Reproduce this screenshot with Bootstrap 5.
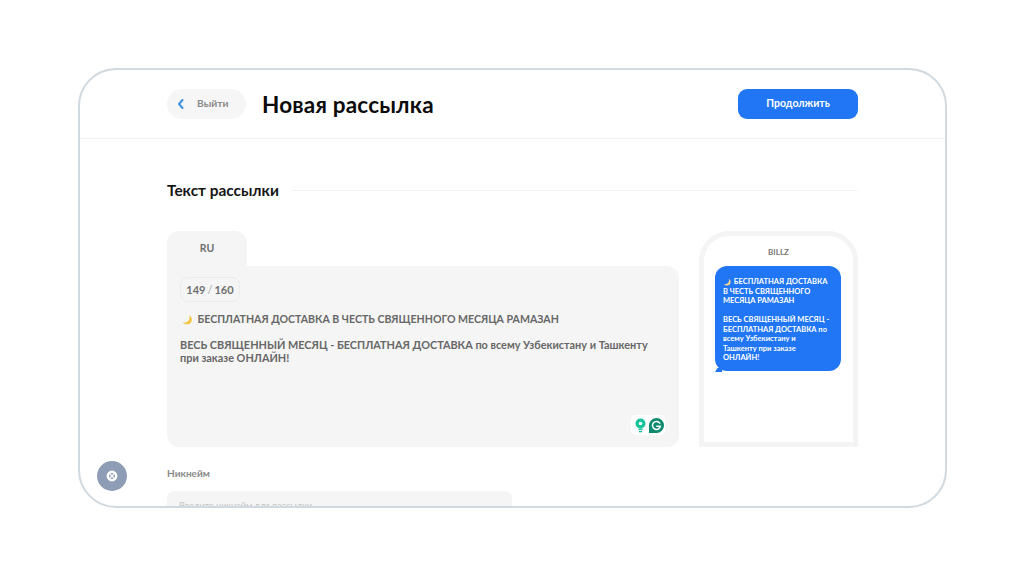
<!DOCTYPE html>
<html lang="ru">

<head>
    <meta charset="UTF-8">
    <meta name="viewport" content="width=device-width, initial-scale=1.0">
    <title>Новая рассылка</title>
    <link rel="stylesheet" href="https://cdn.jsdelivr.net/npm/bootstrap@5.3.0/dist/css/bootstrap.min.css">
    <style>
        html, body { height: 100%; overflow: hidden; background: #fff; }
        body { font-family: Lato, "Noto Sans", sans-serif; }
        .app-frame { position: relative; width: 869px; height: 440px; margin: 68px 0 0 78px; border: 2px solid #d0d9e0; border-radius: 38px; overflow: hidden; background: #fff; }
        .top-bar { height: 69px; padding: 18px 87px; border-bottom: 1px solid #f0f2f4; }
        .back-btn { width: 79px; height: 30px; border-radius: 15px; background: #f6f6f6; font-size: 10.3px; font-weight: 700; color: #8b8b8b; padding-left: 10px; gap: 13px; }
        .page-title { font-size: 22.5px; font-weight: 700; color: #0b0b0b; margin: 0 0 0 16px; letter-spacing: .2px; }
        .next-btn { width: 120px; height: 30px; border-radius: 9px; background: #2176f5; color: #fff; font-size: 10.5px; font-weight: 700; border: 0; padding: 0; }
        .page-body { padding: 41px 87px 0; }
        .section-title { font-size: 15.4px; font-weight: 700; color: #151515; margin: 0 14px 0 0; line-height: 20px; }
        .dots-line { border-top: 1px dotted #e8e8e8; }
        .editor-row { margin-top: 31px; gap: 20px; }
        .editor-col { width: 512px; }
        .lang-tab { width: 80px; height: 35px; background: #f5f5f5; border-radius: 12px 12px 0 0; font-size: 10.5px; font-weight: 700; color: #6f6f6f; }
        .editor-panel { position: relative; height: 181px; background: #f5f5f5; border-radius: 0 12px 12px 12px; padding: 11px 12px 0 13px; font-size: 10.6px; font-weight: 700; color: #676767; line-height: 13px; }
        .counter-pill { width: 60px; height: 25px; border: 1px solid #ececec; border-radius: 8px; font-size: 11px; font-weight: 700; color: #6f6f6f; margin-bottom: 11px; padding-bottom: 1px; }
        .counter-pill span { color: #aaa; font-weight: 400; margin: 0 2px; }
        .msg-line { margin: 0; }
        .msg-moon { margin: 0 2px 0 2px; vertical-align: -2px; }
        .msg-gap { margin-top: 12px; font-size: 10.9px; }
        .grammar-box { position: absolute; right: 14px; bottom: 12px; width: 34px; height: 20px; background: #fff; border-radius: 5px; gap: 2px; padding-left: 1px; }
        .phone-box { width: 159px; height: 216px; border: 5px solid #f4f4f4; border-radius: 30px 30px 0 0; padding: 11px 11px 0; }
        .sender-name { font-size: 8px; font-weight: 700; color: #777; text-align: center; line-height: 10px; margin-bottom: 9px; }
        .sms-bubble { position: relative; width: 126px; height: 105px; background: #2176f5; border-radius: 12px; color: #fff; font-size: 7.5px; font-weight: 700; line-height: 9.5px; padding: 11px 4px 0 8px; white-space: nowrap; }
        .sms-bubble::after { content: ""; position: absolute; left: 0; bottom: -1px; width: 7px; height: 4px; background: #2176f5; clip-path: polygon(0 100%, 100% 100%, 100% 0, 35% 0); }
        .nick-label { font-size: 10px; font-weight: 700; color: #8a8a8a; margin: 19px 0 11px; line-height: 14px; }
        .nick-input { width: 345px; height: 40px; background: #f5f5f5; border-radius: 8px; padding: 8px 12px; font-size: 9px; color: #c4c4c4; }
        .help-btn { position: absolute; left: 17px; top: 391px; width: 30px; height: 30px; border-radius: 50%; background: #8e9db5; }
    </style>
</head>

<body>
    <div class="app-frame">
        <div class="top-bar d-flex align-items-center">
            <div class="back-btn d-flex align-items-center">
                <svg width="7" height="10" viewBox="0 0 7 10"><path d="M5.500 1 2 5l3.500 4" fill="none" stroke="#3f8fe0" stroke-width="2" stroke-linecap="round" stroke-linejoin="round"/></svg>
                <span>Выйти</span>
            </div>
            <h1 class="page-title">Новая рассылка</h1>
            <button type="button" class="next-btn btn ms-auto">Продолжить</button>
        </div>

        <div class="page-body">
            <div class="d-flex align-items-center">
                <h2 class="section-title">Текст рассылки</h2>
                <div class="dots-line flex-grow-1"></div>
            </div>

            <div class="editor-row d-flex">
                <div class="editor-col">
                    <div class="lang-tab d-flex align-items-center justify-content-center">RU</div>
                    <div class="editor-panel">
                        <div class="counter-pill d-flex align-items-center justify-content-center">149<span>/</span>160</div>
                        <p class="msg-line"><svg class="msg-moon" width="11" height="11" viewBox="0 0 11 11"><path d="M.5 8.500c3 .6 5.800-.6 6.800-3.300.5-1.500.4-3-.2-4.200 2.600 1.600 3.600 4.700 2 7.200C7.500 10.800 3 11 .5 8.500z" fill="#f4c542"/></svg> БЕСПЛАТНАЯ ДОСТАВКА В ЧЕСТЬ СВЯЩЕННОГО МЕСЯЦА РАМАЗАН</p>
                        <p class="msg-line msg-gap">ВЕСЬ СВЯЩЕННЫЙ МЕСЯЦ - БЕСПЛАТНАЯ ДОСТАВКА по всему Узбекистану и Ташкенту<br>при заказе ОНЛАЙН!</p>
                        <div class="grammar-box d-flex align-items-center justify-content-center">
                            <svg width="13" height="15" viewBox="0 0 13 15"><circle cx="6.500" cy="5.500" r="5" fill="#15c39a"/><circle cx="6.500" cy="5.500" r="1.800" fill="#fff"/><rect x="4.500" y="10.500" width="4" height="1.500" fill="#15c39a"/><rect x="5" y="12.800" width="3" height="1.500" fill="#15c39a"/></svg>
                            <svg width="15" height="15" viewBox="0 0 15 15"><path d="M7.500 0a7.500 7.500 0 1 1 0 15H0V7.500A7.500 7.500 0 0 1 7.500 0z" fill="#0b8a6e"/><path d="M10.800 5.200a4 4 0 1 0 .6 3H7.800" fill="none" stroke="#fff" stroke-width="1.500" stroke-linecap="round"/></svg>
                        </div>
                    </div>
                </div>

                <div class="phone-box">
                    <div class="sender-name">BILLZ</div>
                    <div class="sms-bubble">
                        <svg width="9" height="8" viewBox="0 0 11 11"><path d="M.5 8.500c3 .6 5.800-.6 6.800-3.300.5-1.500.4-3-.2-4.200 2.600 1.600 3.600 4.700 2 7.200C7.500 10.800 3 11 .5 8.500z" fill="#f4d58a"/></svg> БЕСПЛАТНАЯ ДОСТАВКА<br>В ЧЕСТЬ СВЯЩЕННОГО<br>МЕСЯЦА РАМАЗАН<br><br>ВЕСЬ СВЯЩЕННЫЙ МЕСЯЦ -<br>БЕСПЛАТНАЯ ДОСТАВКА по<br>всему Узбекистану и<br>Ташкенту при заказе<br>ОНЛАЙН!
                    </div>
                </div>
            </div>

            <div class="nick-label">Никнейм</div>
            <div class="nick-input">Введите никнейм для рассылки</div>
        </div>

        <div class="help-btn d-flex align-items-center justify-content-center">
            <svg width="12" height="12" viewBox="0 0 12 12"><circle cx="6" cy="6" r="4.200" fill="none" stroke="#fff" stroke-width="2.400"/><path d="M3 3l6 6M9 3l-6 6" stroke="#fff" stroke-width="1.200"/></svg>
        </div>
    </div>

    <script src="https://cdn.jsdelivr.net/npm/bootstrap@5.3.0/dist/js/bootstrap.bundle.min.js"></script>
</body>

</html>
